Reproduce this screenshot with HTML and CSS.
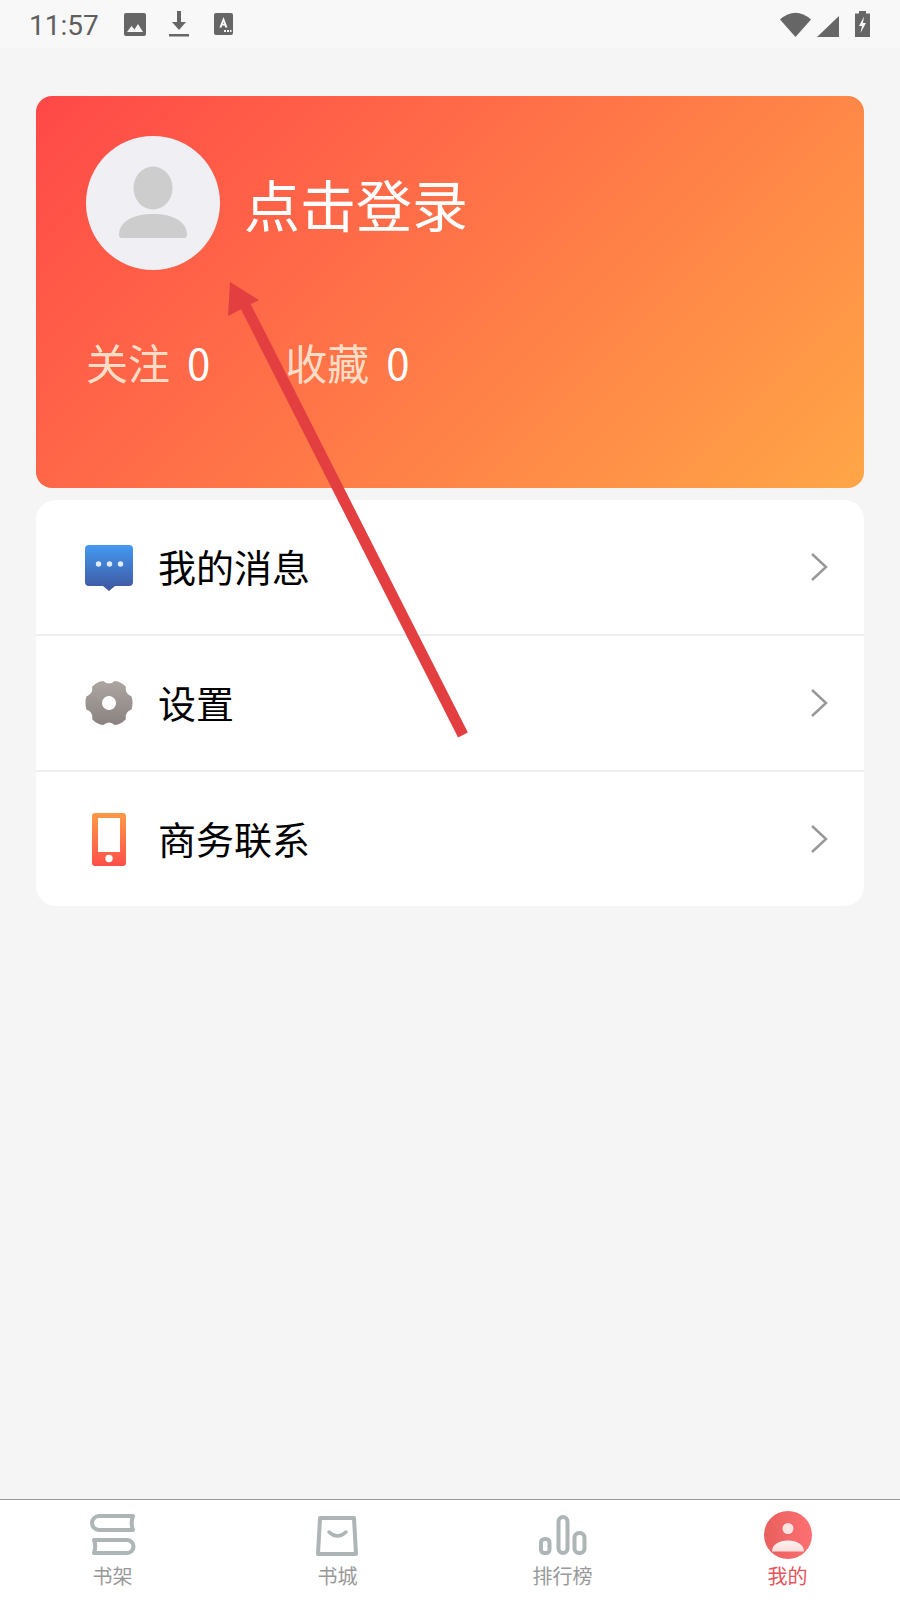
FILE: index.html
```html
<!DOCTYPE html>
<html lang="zh">
<head>
    <meta charset="UTF-8">
    <meta name="viewport" content="width=device-width, initial-scale=1.0">
    <title>我的</title>
    <link rel="stylesheet" href="styles.css">
</head>
<body>
    <div class="status-bar">
        <span class="time">11:57</span>
        <svg class="st-image" viewBox="0 0 22 23"><path d="M2 0h18a2 2 0 0 1 2 2v19a2 2 0 0 1-2 2H2a2 2 0 0 1-2-2V2a2 2 0 0 1 2-2z" fill="#666"/><path d="M3 19l4.500-6 3 3.500 3.500-5.500 5 8z" fill="#f8f8f8"/></svg>
        <svg class="st-download" viewBox="0 0 20 26"><path d="M8 0h4v11h5l-7 8-7-8h5z" fill="#666"/><rect x="0" y="23" width="20" height="2.500" fill="#666"/></svg>
        <svg class="st-font" viewBox="0 0 19 22"><rect width="19" height="22" rx="2" fill="#666"/><path d="M9.500 4l4 10.500h-2.200l-.7-2H8.300l-.7 2H5.400zM9 10.800h1l-.5-2z" fill="#f8f8f8" fill-rule="evenodd"/><path d="M10 17h2v2h-2zM13 17h2v2h-2zM16 17h1.500v2H16z" fill="#f8f8f8"/></svg>
        <div class="status-right">
            <svg class="st-wifi" viewBox="0 0 31 25"><path d="M0 7.500Q15.500-6 31 7.500L15.500 25z" fill="#666"/></svg>
            <svg class="st-signal" viewBox="0 0 22 21"><path d="M22 0v21H0z" fill="#666"/></svg>
            <svg class="st-battery" viewBox="0 0 15 26"><path d="M4 0h7v2.500h4V26H0V2.500h4z" fill="#666"/><path d="M9 5.500L4 15h3l-1.500 7L11 12H8z" fill="#f8f8f8"/></svg>
        </div>
    </div>

    <div class="content">
        <div class="user-card">
            <div class="user-top">
                <div class="avatar">
                    <svg viewBox="0 0 134 134" width="134" height="134"><ellipse cx="67" cy="52" rx="19.500" ry="21.500" fill="#cdcdcd"/><path d="M33 99c0-14 15-21 34-21s34 7 34 21a3 3 0 0 1-3 3H36a3 3 0 0 1-3-3z" fill="#cdcdcd"/></svg>
                </div>
                <span class="login-text">点击登录</span>
            </div>
            <div class="stats">
                <div class="stat"><span class="stat-label">关注</span><span class="stat-num">0</span></div>
                <div class="stat"><span class="stat-label">收藏</span><span class="stat-num">0</span></div>
            </div>
        </div>

        <div class="menu-card">
            <div class="menu-row">
                <svg class="menu-icon" viewBox="0 -1 48 48">
                    <defs><linearGradient id="msgGrad" x1="0" y1="0" x2="0" y2="1"><stop offset="0" stop-color="#4499f2"/><stop offset="1" stop-color="#3f559f"/></linearGradient></defs>
                    <path d="M4 1h40a4 4 0 0 1 4 4v33a4 4 0 0 1-4 4H30l-6 5-6-5H4a4 4 0 0 1-4-4V5a4 4 0 0 1 4-4z" fill="url(#msgGrad)"/>
                    <circle cx="13.500" cy="20" r="2.700" fill="#dfeafb"/><circle cx="24.500" cy="20" r="2.700" fill="#dfeafb"/><circle cx="35.500" cy="20" r="2.700" fill="#dfeafb"/>
                </svg>
                <span class="menu-text">我的消息</span>
                <svg class="chevron" viewBox="0 0 18 30"><path d="M2 2l14 13L2 28" fill="none" stroke="#999" stroke-width="2.500"/></svg>
            </div>
            <div class="menu-row">
                <svg class="menu-icon" viewBox="0 0 48 48">
                    <defs><linearGradient id="gearGrad" x1="0" y1="0" x2="0" y2="1"><stop offset="0" stop-color="#aca5a0"/><stop offset="1" stop-color="#8a8280"/></linearGradient></defs>
                    <path fill-rule="evenodd" d="M46.600 17.500Q48.500 24 46.600 30.500Q39.600 33 40.900 40.300Q36 45.500 29.700 46Q24 41 18.300 46Q12 45.500 7.100 40.300Q8.400 33 1.400 30.500Q-.5 24 1.400 17.500Q8.400 15 7.100 7.700Q12 2.500 18.300 2Q24 7 29.700 2Q36 2.500 40.900 7.700Q39.600 15 46.600 17.500zM24 17a7 7 0 1 0 .01 0z" fill="url(#gearGrad)"/>
                </svg>
                <span class="menu-text">设置</span>
                <svg class="chevron" viewBox="0 0 18 30"><path d="M2 2l14 13L2 28" fill="none" stroke="#999" stroke-width="2.500"/></svg>
            </div>
            <div class="menu-row">
                <svg class="menu-icon phone-icon" viewBox="0 0 34 53">
                    <defs><linearGradient id="phoneGrad" x1="0" y1="0" x2="0" y2="1"><stop offset="0" stop-color="#ff9a48"/><stop offset="1" stop-color="#ff4f4a"/></linearGradient></defs>
                    <rect width="34" height="53" rx="3" fill="url(#phoneGrad)"/>
                    <rect x="6" y="5" width="22" height="34" fill="#fff"/>
                    <circle cx="17" cy="45.500" r="3.700" fill="#fff"/>
                </svg>
                <span class="menu-text">商务联系</span>
                <svg class="chevron" viewBox="0 0 18 30"><path d="M2 2l14 13L2 28" fill="none" stroke="#999" stroke-width="2.500"/></svg>
            </div>
        </div>
    </div>

    <div class="tab-bar">
        <div class="tab">
            <svg class="tab-icon" viewBox="0 0 48 44"><path d="M44 4H10a7 7 0 0 0 0 14H44c-1.500-4-1.500-10 0-14zM5 28H38a6.500 6.500 0 0 1 0 13H5c1.500-4 1.500-9 0-13z" fill="none" stroke="#adb5b6" stroke-width="4" stroke-linejoin="round"/></svg>
            <span class="tab-label">书架</span>
        </div>
        <div class="tab">
            <svg class="tab-icon" viewBox="0 0 48 44"><path d="M6 6h34l2 36H4z" fill="none" stroke="#adb5b6" stroke-width="4" stroke-linejoin="round"/><path d="M15 20q8.500 8 17 0" fill="none" stroke="#adb5b6" stroke-width="3.500" stroke-linecap="round"/></svg>
            <span class="tab-label">书城</span>
        </div>
        <div class="tab">
            <svg class="tab-icon" viewBox="0 0 48 44"><g fill="none" stroke="#adb5b6" stroke-width="4"><rect x="2" y="27" width="8.500" height="14" rx="3.500"/><rect x="19.500" y="5" width="9" height="36" rx="4.500"/><rect x="35.500" y="21" width="10" height="20" rx="4.500"/></g></svg>
            <span class="tab-label">排行榜</span>
        </div>
        <div class="tab tab-active">
            <svg class="tab-icon" viewBox="0 0 48 44">
                <defs>
                    <linearGradient id="meGrad" x1="0" y1="0" x2="1" y2="0"><stop offset="0" stop-color="#e85f5d"/><stop offset="1" stop-color="#fd7072"/></linearGradient>
                    <linearGradient id="meBody" x1="0" y1="0" x2="0" y2="1"><stop offset="0" stop-color="#fff2f0"/><stop offset="1" stop-color="#fcdcdc"/></linearGradient>
                </defs>
                <circle cx="24" cy="23" r="24" fill="url(#meGrad)"/>
                <circle cx="24" cy="16.500" r="5.500" fill="#fde3e1"/>
                <path d="M8 39.500c0-7 7-11 16-11s16 4 16 11z" fill="url(#meBody)"/>
            </svg>
            <span class="tab-label">我的</span>
        </div>
    </div>

    <!-- 标注箭头 -->
    <svg class="arrow" viewBox="0 0 900 1600" width="900" height="1600">
        <path d="M463 735L245 305" stroke="#e33f40" stroke-width="11" fill="none"/>
        <path d="M230 282L259 300 228 316z" fill="#e33f40"/>
    </svg>
</body>
</html>
```

FILE: styles.css
```css
html, body {
    margin: 0;
    padding: 0;
    width: 900px;
    height: 1600px;
    overflow: hidden;
    font-family: "Noto Sans CJK SC", "Noto Sans", sans-serif;
    background-color: #f5f5f5;
}
body {
    display: flex;
    flex-direction: column;
    position: relative;
}
svg {
    display: block;
    flex: none;
}

/* status bar */
.status-bar {
    height: 48px;
    display: flex;
    align-items: center;
    padding: 0 30px 0 29px;
    background-color: #f8f8f8;
}
.time {
    font-family: Roboto, sans-serif;
    font-size: 28px;
    color: #5f5f5f;
    width: 95px;
    padding-top: 2px;
}
.st-image { width: 22px; height: 23px; margin-right: 23px; }
.st-download { width: 20px; height: 26px; margin-right: 25px; }
.st-font { width: 19px; height: 22px; }
.status-right {
    margin-left: auto;
    display: flex;
    align-items: flex-end;
}
.st-wifi { width: 31px; height: 25px; margin-right: 6px; }
.st-signal { width: 22px; height: 21px; margin-right: 16px; }
.st-battery { width: 15px; height: 26px; }

/* content */
.content {
    flex: 1;
    padding: 48px 36px 0;
}
.user-card {
    height: 392px;
    box-sizing: border-box;
    padding: 40px 50px 0;
    border-radius: 16px;
    background: linear-gradient(135deg, #ff4848, #ffa647);
}
.user-top {
    display: flex;
    align-items: center;
    gap: 24px;
}
.avatar {
    width: 134px;
    height: 134px;
    border-radius: 50%;
    background-color: #efeff4;
}
.login-text {
    font-size: 56px;
    color: #fff;
    line-height: 1;
}
.stats {
    display: flex;
    margin-top: 62px;
    gap: 75px;
}
.stat {
    display: flex;
    align-items: center;
    gap: 17px;
    font-size: 42px;
    line-height: 60px;
}
.stat-label { color: #ffdcc6; }
.stat-num {
    color: #fff;
    font-size: 42px;
}

.menu-card {
    margin-top: 12px;
    background-color: #fff;
    border-radius: 20px;
}
.menu-row {
    height: 136px;
    display: flex;
    align-items: center;
    padding: 0 36px 0 49px;
    border-bottom: 2px solid #eeeeee;
    box-sizing: border-box;
}
.menu-row:last-child {
    height: 134px;
    border-bottom: none;
}
.menu-icon {
    width: 48px;
    height: 48px;
}
.phone-icon {
    width: 34px;
    height: 53px;
    margin: 0 7px;
}
.menu-text {
    margin-left: 25px;
    padding-bottom: 4px;
    font-size: 38px;
    color: #000;
}
.chevron {
    width: 18px;
    height: 30px;
    margin-left: auto;
}

/* bottom tabs */
.tab-bar {
    height: 101px;
    box-sizing: border-box;
    display: flex;
    background-color: #fff;
    border-top: 1px solid #999;
}
.tab {
    flex: 1;
    display: flex;
    flex-direction: column;
    align-items: center;
    padding-top: 12px;
}
.tab-icon {
    width: 48px;
    height: 44px;
    overflow: visible;
}
.tab-label {
    margin-top: 6px;
    font-size: 20px;
    line-height: 28px;
    color: #999;
}
.tab-active .tab-label {
    color: #e5545a;
}

/* annotation on top of the page */
.arrow {
    position: absolute;
    left: 0;
    top: 0;
    pointer-events: none;
}
```
